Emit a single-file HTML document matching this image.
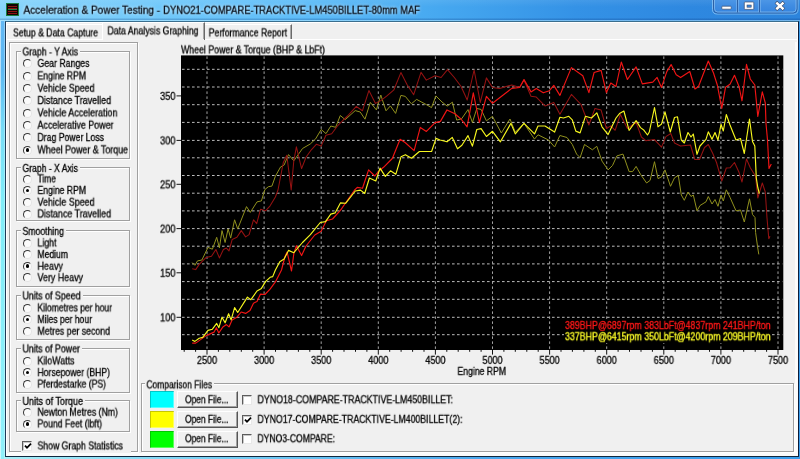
<!DOCTYPE html>
<html lang="en"><head><meta charset="utf-8"><title>Acceleration &amp; Power Testing</title>
<style>
html,body{margin:0;padding:0;background:#f0f0f0}
body{width:800px;height:459px;overflow:hidden;position:relative;background:#f0f0f0;font-family:"Liberation Sans",sans-serif}
body>div,.abs,.t{position:absolute}
.t{white-space:nowrap;line-height:1.15;transform-origin:0 0;will-change:transform;-webkit-text-stroke:0.3px currentColor;font-family:"Liberation Sans",sans-serif}
.frame{left:0;top:0;width:800px;height:459px;background:linear-gradient(90deg,#a8f0f8 0,#7cd4f6 25%,#4aa8ee 60%,#389cec 100%)}
.lb{left:0;top:20px;width:5px;height:439px;background:linear-gradient(90deg,rgba(255,255,255,.55) 0,rgba(255,255,255,.55) 1px,rgba(255,255,255,0) 1px,rgba(255,255,255,0) 4px,rgba(255,255,255,.3) 4px),linear-gradient(180deg,#62b8f4 0,#5cb8f2 50px,#78dcf6 110px,#80ecf8 180px,#90f0fa 100%)}
.title{left:0;top:0;width:800px;height:21px;background:linear-gradient(180deg,rgba(255,255,255,.08) 0,rgba(255,255,255,0) 7px,rgba(0,0,0,0) 18px,rgba(0,40,110,.22) 19px,rgba(0,40,110,.22) 20px,rgba(200,240,255,.45) 20px,rgba(200,240,255,.45) 21px),linear-gradient(90deg,#88d4fb 0,#70c8fa 20%,#5cbcf8 38%,#46a8f0 55%,#3492e6 72%,#2e88e0 86%,#2c84dc 100%)}
.client{left:5px;top:21px;width:794px;height:436px;background:#f0f0f0;border:1px solid #1c3a58;border-top-color:#3a6e8e;border-right-color:#0c1c38;border-bottom-color:#10283e;box-sizing:border-box;box-shadow:inset 1px 1px 0 #fff,inset -1px -1px 0 #fff}
.icon{left:6px;top:3px;width:13px;height:13px;background:#120404;border:1px solid #1c7c40;box-sizing:border-box}
.icon b{position:absolute;left:1px;right:1px;height:3px;border-top:1px solid #8c1414;border-bottom:1px solid #8c1414;box-sizing:border-box}
.icon b:nth-child(1){top:1.500px}.icon b:nth-child(2){top:5px;height:1px;border:none;background:#1e8444}.icon b:nth-child(3){top:6.500px}
.tabpanel{left:6px;top:39px;width:791px;height:416px;border-top:1px solid #fff;box-sizing:border-box}
.tab{box-sizing:border-box;border:1px solid #fff;border-right:1px solid #6a6a6a;border-bottom:none;background:#f0f0f0;box-shadow:inset -1px 0 0 #a8a8a8}
.tab.t1{border-right-color:#f0f0f0;box-shadow:none}.tab.sel{border-bottom:none}
.gb{box-sizing:border-box;border:1px solid #a0a0a0;box-shadow:inset 1px 1px 0 #fff,1px 1px 0 #fff}
.rd{width:9px;height:9px;border-radius:50%;box-sizing:border-box;background:#fbfbfb;border:1.3px solid #777;border-top-color:#383838;border-left-color:#383838;border-bottom-color:#e4e4e4;border-right-color:#e4e4e4}
.rd i{position:absolute;left:1.600px;top:1.600px;width:3.600px;height:3.600px;border-radius:50%;background:#000}
.cb{width:10px;height:10px;box-sizing:border-box;background:#fff;border:1px solid #5c5c5c;border-bottom-color:#e8e8e8;border-right-color:#e8e8e8;box-shadow:inset 1px 1px 0 #c8c8c8}
.cb svg{position:absolute;left:-0.500px;top:-0.500px}
.sw{box-sizing:border-box;box-shadow:inset 1px 1px 0 rgba(0,0,0,.22),inset -1px -1px 0 rgba(255,255,255,.35)}
.btn{box-sizing:border-box;background:#f0f0f0;border:1px solid #fff;border-right-color:#555;border-bottom-color:#555;box-shadow:inset -1px -1px 0 #a0a0a0}
</style></head>
<body>
<div class="frame"></div>
<div class="lb"></div>
<div class="title"></div>
<div class="client"></div>
<div class="icon"><b></b><b></b><b></b></div>
<svg class="abs" style="left:710px;top:0" width="90" height="17" viewBox="0 0 90 17">
<defs><linearGradient id="cg" x1="0" y1="0" x2="0" y2="1"><stop offset="0" stop-color="#4f98e6"/><stop offset="0.5" stop-color="#3f8ce2"/><stop offset="1" stop-color="#3584de"/></linearGradient></defs>
<path d="M2.5 -1 V9.5 Q2.5 14 7 14 H84 Q88 14 88 9.500 V-1" fill="none" stroke="#8cc4f4" stroke-width="1" opacity="0.8"/>
<path d="M3.5 -1 V9 Q3.500 13 7.500 13 H83.500 Q87 13 87 9 V-1 Z" fill="url(#cg)" stroke="#2d5fa4" stroke-width="1"/>
<path d="M4.5 0 V8.800 Q4.500 12 7.800 12 H83 Q86 12 86 8.800 V0" fill="none" stroke="#8fc3f2" stroke-width="0.900" opacity="0.75"/>
<path d="M27.5 0 V12.500 M49.500 0 V12.500" stroke="#2d5fa4" stroke-width="1"/>
<path d="M28.5 0 V12 M50.500 0 V12 M26.500 0 V12 M48.500 0 V12" stroke="#8fc3f2" stroke-width="0.800" opacity="0.6"/>
<rect x="11.800" y="6.200" width="9.400" height="3" rx="0.800" fill="#fff" stroke="#3c4c6c" stroke-width="0.700"/>
<rect x="34.300" y="2" width="9.500" height="7.400" rx="0.800" fill="#fff" stroke="#3c4c6c" stroke-width="0.700"/>
<rect x="37" y="5" width="4.200" height="2.200" fill="#3a86dc" stroke="#3c4c6c" stroke-width="0.600"/>
<path d="M67.200 3.400 L72.600 8.400 M72.600 3.400 L67.200 8.400" stroke="#3c4c6c" stroke-width="3.600" stroke-linecap="square"/>
<path d="M67.200 3.400 L72.600 8.400 M72.600 3.400 L67.200 8.400" stroke="#fff" stroke-width="2.500" stroke-linecap="square"/>
</svg>
<div class="tabpanel"></div>
<div class="tab t1" style="left:6px;top:24px;width:97px;height:15px"></div>
<div class="tab t3" style="left:204px;top:24px;width:88px;height:15px"></div>
<div class="tab sel" style="left:102px;top:22px;width:103px;height:18px"></div><div style="left:103px;top:39px;width:101px;height:2px;background:#f0f0f0"></div>
<div class="gb" style="left:9px;top:42px;width:129px;height:410px"></div>
<div class="gb" style="left:16px;top:50.5px;width:114px;height:108.0px"></div>
<div style="left:20.5px;top:44.5px;width:59.5px;height:12px;background:#f0f0f0"></div>
<div class="rd" style="left:23px;top:59.0px"></div>
<div class="rd" style="left:23px;top:71.5px"></div>
<div class="rd" style="left:23px;top:83.8px"></div>
<div class="rd" style="left:23px;top:96.1px"></div>
<div class="rd" style="left:23px;top:108.5px"></div>
<div class="rd" style="left:23px;top:120.8px"></div>
<div class="rd" style="left:23px;top:133.1px"></div>
<div class="rd" style="left:23px;top:145.5px"><i></i></div>
<div class="gb" style="left:16px;top:167px;width:114px;height:54px"></div>
<div style="left:20.5px;top:161px;width:59.5px;height:12px;background:#f0f0f0"></div>
<div class="rd" style="left:23px;top:174.5px"></div>
<div class="rd" style="left:23px;top:186.0px"><i></i></div>
<div class="rd" style="left:23px;top:197.8px"></div>
<div class="rd" style="left:23px;top:209.5px"></div>
<div class="gb" style="left:16px;top:230px;width:114px;height:57px"></div>
<div style="left:20.5px;top:224px;width:45.5px;height:12px;background:#f0f0f0"></div>
<div class="rd" style="left:23px;top:238.5px"></div>
<div class="rd" style="left:23px;top:250.1px"></div>
<div class="rd" style="left:23px;top:261.8px"><i></i></div>
<div class="rd" style="left:23px;top:273.3px"></div>
<div class="gb" style="left:16px;top:294.5px;width:114px;height:45.0px"></div>
<div style="left:20.5px;top:288.5px;width:62.0px;height:12px;background:#f0f0f0"></div>
<div class="rd" style="left:23px;top:303.5px"></div>
<div class="rd" style="left:23px;top:315.1px"><i></i></div>
<div class="rd" style="left:23px;top:326.8px"></div>
<div class="gb" style="left:16px;top:347.5px;width:114px;height:45.19999999999999px"></div>
<div style="left:20.5px;top:341.5px;width:61.5px;height:12px;background:#f0f0f0"></div>
<div class="rd" style="left:23px;top:356.5px"></div>
<div class="rd" style="left:23px;top:368.2px"><i></i></div>
<div class="rd" style="left:23px;top:379.7px"></div>
<div class="gb" style="left:16px;top:400px;width:114px;height:32px"></div>
<div style="left:20.5px;top:394px;width:64.5px;height:12px;background:#f0f0f0"></div>
<div class="rd" style="left:23px;top:407.8px"></div>
<div class="rd" style="left:23px;top:419.5px"><i></i></div>
<div style="left:21px;top:440px;width:110px;height:13px;background:#f0f0f0"></div>
<div class="cb" style="left:22px;top:440.7px"><svg width="10" height="10" viewBox="0 0 10 10"><path d="M2 4.6 L4 6.8 L8 2.6" fill="none" stroke="#000" stroke-width="1.8"/></svg></div>
<div style="left:6px;top:453px;width:792px;height:3px;background:#fbfbfb"></div>
<div style="left:795px;top:42px;width:3px;height:414px;background:#fbfbfb"></div>
<div class="gb" style="left:141px;top:382.5px;width:653px;height:69.5px"></div>
<div style="left:144.5px;top:376.5px;width:69.5px;height:12px;background:#f0f0f0"></div>
<div class="sw" style="left:150px;top:391px;width:24px;height:17px;background:#00ffff"></div>
<div class="btn" style="left:176.5px;top:391px;width:61px;height:17px"></div>
<div class="cb" style="left:242px;top:395px"></div>
<div class="sw" style="left:150px;top:411px;width:24px;height:17px;background:#ffff00"></div>
<div class="btn" style="left:176.5px;top:411px;width:61px;height:17px"></div>
<div class="cb" style="left:242px;top:414.6px"><svg width="10" height="10" viewBox="0 0 10 10"><path d="M2 4.6 L4 6.8 L8 2.6" fill="none" stroke="#000" stroke-width="1.8"/></svg></div>
<div class="sw" style="left:150px;top:431px;width:24px;height:17px;background:#00ff00"></div>
<div class="btn" style="left:176.5px;top:431px;width:61px;height:17px"></div>
<div class="cb" style="left:242px;top:434px"></div>
<svg class="abs" style="left:0;top:0" width="800" height="459" viewBox="0 0 800 459">
<rect x="181" y="55.4" width="602.3" height="294.6" fill="#000"/>
<path d="M182 334.7H782.3M182 317.3H782.3M182 299.3H782.3M182 281.6H782.3M182 263.9H782.3M182 246.2H782.3M182 228.6H782.3M182 210.9H782.3M182 193.2H782.3M182 175.5H782.3M182 157.8H782.3M182 140.4H782.3M182 122.4H782.3M182 104.7H782.3M182 87.0H782.3M182 69.3H782.3" stroke="#bcbcbc" stroke-width="1" stroke-dasharray="2.600 2.400" fill="none"/>
<path d="M207.0 56.4V350M264.1 56.4V350M321.2 56.4V350M378.3 56.4V350M435.4 56.4V350M492.5 56.4V350M549.6 56.4V350M606.7 56.4V350M663.8 56.4V350M720.9 56.4V350M778.0 56.4V350" stroke="#a4a4a4" stroke-width="1" stroke-dasharray="2.500 2.500" fill="none"/>
<path d="M176.500 317.3H181M176.500 272.8H181M176.500 228.6H181M176.500 184.3H181M176.500 140.4H181M176.500 95.9H181M184.2 350V351.8M195.6 350V351.8M207.0 350V354.6M218.4 350V351.8M229.8 350V351.8M241.3 350V351.8M252.7 350V351.8M264.1 350V354.6M275.5 350V351.8M286.9 350V351.8M298.4 350V351.8M309.8 350V351.8M321.2 350V354.6M332.6 350V351.8M344.0 350V351.8M355.5 350V351.8M366.9 350V351.8M378.3 350V354.6M389.7 350V351.8M401.1 350V351.8M412.6 350V351.8M424.0 350V351.8M435.4 350V354.6M446.8 350V351.8M458.2 350V351.8M469.7 350V351.8M481.1 350V351.8M492.5 350V354.6M503.9 350V351.8M515.3 350V351.8M526.8 350V351.8M538.2 350V351.8M549.6 350V354.6M561.0 350V351.8M572.4 350V351.8M583.9 350V351.8M595.3 350V351.8M606.7 350V354.6M618.1 350V351.8M629.5 350V351.8M641.0 350V351.8M652.4 350V351.8M663.8 350V354.6M675.2 350V351.8M686.6 350V351.8M698.1 350V351.8M709.5 350V351.8M720.9 350V354.6M732.3 350V351.8M743.7 350V351.8M755.2 350V351.8M766.6 350V351.8M778.0 350V354.6" stroke="#111" stroke-width="1" fill="none"/>
<polyline points="192.2,262.6 194.9,265.3 197.5,260.9 201.9,260.0 208.0,247.4 212.4,249.2 216.7,237.3 219.4,247.8 222.0,230.6 225.1,242.5 228.1,228.9 230.7,238.1 234.6,219.8 237.7,228.9 246.5,206.6 250.3,212.4 257.0,201.9 261.4,200.9 264.9,189.5 268.4,186.7 271.9,186.1 275.4,176.2 280.6,166.9 284.1,165.1 288.5,154.6 293.8,160.8 302.5,148.5 310.4,143.9 315.6,138.9 321.2,129.5 326.0,133.6 330.8,126.0 335.6,127.3 340.3,115.5 345.2,119.7 355.2,110.6 360.2,112.0 365.0,119.2 370.3,102.4 376.4,109.9 380.8,95.0 386.0,110.8 390.4,105.9 395.6,113.4 400.9,95.4 405.3,96.4 411.4,103.8 416.6,99.4 426.3,104.6 431.5,107.6 435.9,95.9 442.0,102.0 447.2,106.1 452.4,102.2 456.7,120.1 461.6,118.8 468.0,109.6 472.4,122.5 476.8,108.5 481.1,109.4 486.4,120.8 492.5,116.4 501.3,133.0 510.0,119.0 515.3,132.1 524.0,123.4 534.5,139.1 538.0,134.8 548.5,140.0 554.6,147.0 559.9,135.5 567.0,137.5 572.3,144.5 576.6,154.1 580.1,157.6 584.5,144.5 592.4,149.8 596.8,146.3 602.0,161.1 608.1,169.9 612.5,165.5 616.9,155.9 623.0,154.1 629.1,171.6 632.6,171.6 636.1,166.4 640.5,174.3 646.6,183.0 650.1,180.4 654.5,161.7 658.0,178.6 661.5,176.9 665.0,169.9 670.5,186.3 674.5,177.8 678.3,175.5 681.3,195.0 684.3,200.3 688.0,192.0 691.0,196.5 693.3,195.0 697.0,210.8 700.0,205.5 706.0,201.8 708.3,196.5 712.0,204.0 715.0,199.5 718.0,206.3 721.0,195.0 723.3,201.0 726.3,189.8 730.0,197.3 736.0,210.8 740.5,210.0 744.3,222.0 749.5,198.8 752.5,214.5 755.0,217.5 755.6,232.5 757.5,246.3 758.8,254.4" fill="none" stroke="#90901e" stroke-width="1" stroke-linejoin="round"/>
<polyline points="192.2,268.8 195.7,269.6 199.2,264.4 206.2,257.4 211.5,256.2 215.9,249.5 219.4,257.9 223.4,249.5 226.4,248.1 229.0,250.9 232.2,239.4 236.9,237.3 241.3,230.6 245.6,236.9 249.1,234.6 253.5,219.8 256.7,223.6 260.5,209.3 265.8,210.7 270.1,205.8 275.4,197.0 278.0,190.0 283.3,162.5 286.8,155.2 291.2,190.0 293.8,160.8 296.4,146.8 301.6,168.6 306.0,157.3 311.3,149.8 316.3,144.3 321.2,146.1 325.9,135.2 331.7,133.7 338.0,125.3 343.3,120.0 347.5,116.0 356.3,106.4 362.4,110.8 368.9,90.6 375.5,103.4 380.8,100.6 386.9,95.9 393.9,89.8 400.9,72.6 407.0,84.5 413.7,94.7 421.0,72.3 426.3,80.1 435.0,75.8 441.1,77.5 447.5,69.6 454.3,77.5 461.1,86.5 467.2,100.0 474.1,70.0 480.3,102.4 486.4,77.9 492.5,87.5 499.5,88.4 511.8,84.9 519.6,87.5 524.0,80.0 531.0,96.3 536.3,97.1 545.0,105.9 553.8,102.4 559.9,114.2 571.4,94.4 581.0,104.5 588.9,125.0 595.0,108.4 601.1,110.1 606.4,128.5 610.8,125.9 615.1,130.3 620.4,114.5 627.4,128.5 636.1,122.4 641.4,137.0 645.8,140.7 654.5,139.6 661.5,147.1 665.9,136.6 670.8,133.5 674.5,143.0 680.5,146.0 690.5,145.0 694.8,159.5 699.5,159.5 704.5,147.5 708.3,144.5 712.8,153.5 716.5,162.5 721.8,181.0 726.3,168.0 730.0,167.8 734.5,162.5 739.0,172.3 742.0,182.0 746.5,159.0 750.3,167.8 755.5,176.0 757.8,198.0 762.3,183.0 765.3,192.0 767.0,218.0 768.8,238.8 770.0,236.3" fill="none" stroke="#941212" stroke-width="1.05" stroke-linejoin="round"/>
<polyline points="192.2,343.1 195.7,343.1 206.2,335.6 214.1,332.1 216.4,327.7 218.8,333.0 222.9,326.9 226.4,324.6 229.0,326.9 232.1,319.9 236.9,317.2 241.2,312.0 245.6,313.4 250.0,310.6 253.5,303.2 257.0,301.5 260.5,294.1 264.9,294.5 270.1,289.2 275.4,281.9 281.5,270.0 285.0,256.5 287.1,252.1 291.5,271.0 293.8,253.9 296.4,245.7 301.6,255.6 306.0,246.0 314.8,235.0 321.1,231.3 326.4,220.8 332.5,219.0 340.4,210.3 347.6,200.0 354.6,190.0 357.3,187.4 362.5,188.3 368.6,169.9 374.8,176.0 378.3,171.6 383.5,167.3 392.3,158.5 400.1,139.3 405.4,142.8 414.1,150.6 420.3,127.4 426.4,131.4 435.1,122.6 440.4,121.4 447.0,109.9 454.9,113.8 461.0,119.0 467.1,126.9 473.3,92.8 479.4,122.5 486.4,96.3 492.5,103.3 511.8,88.4 519.6,87.5 524.0,79.6 531.0,91.9 536.3,88.4 543.3,92.8 549.4,90.7 553.8,85.4 559.9,95.4 571.4,67.6 582.8,75.7 588.9,92.6 594.1,72.5 601.1,70.4 606.4,92.6 610.8,83.0 616.0,86.5 621.3,62.0 627.4,79.5 636.1,66.9 642.3,83.9 652.8,82.1 657.1,77.4 661.5,87.4 666.8,71.6 671.1,64.6 676.2,74.8 680.6,77.6 689.8,71.5 695.0,89.0 698.5,86.5 708.3,61.0 713.5,73.0 717.3,85.0 721.8,108.3 725.5,87.3 730.0,84.3 734.5,75.3 739.0,86.5 742.0,100.8 746.5,64.3 750.3,79.0 754.8,85.0 757.8,116.5 762.3,91.8 765.3,103.0 766.0,123.5 767.5,140.0 769.0,168.5 771.3,164.0" fill="none" stroke="#f01414" stroke-width="1.15" stroke-linejoin="round"/>
<polyline points="192.2,340.0 194.9,341.4 199.2,338.2 202.7,337.4 208.0,330.4 212.4,329.2 216.7,323.4 218.9,327.7 222.0,317.2 225.1,322.8 228.6,313.7 231.1,319.9 234.6,307.6 237.7,312.5 247.4,297.1 250.9,299.7 257.0,291.0 261.4,288.4 265.7,281.4 270.1,277.3 272.7,276.6 275.4,270.0 279.8,261.8 284.1,259.1 288.5,250.4 293.8,252.7 302.5,242.5 310.4,234.6 320.3,222.5 325.5,221.6 330.8,214.1 335.1,212.9 340.4,202.9 345.6,203.3 355.3,191.0 360.5,190.1 364.7,193.5 369.4,178.0 375.8,181.0 380.0,168.1 385.3,176.4 390.5,170.8 395.8,174.3 401.0,156.8 405.4,154.7 411.5,158.2 419.4,151.5 431.6,151.5 436.0,138.4 440.0,140.0 447.0,141.8 452.3,137.4 457.5,148.8 461.9,145.3 468.0,135.6 472.4,146.1 476.8,129.5 481.1,128.6 486.4,136.5 492.5,131.3 500.4,141.8 510.9,123.4 515.3,133.9 524.0,123.4 534.5,133.9 538.0,126.0 545.0,126.0 554.6,132.1 559.9,117.3 563.5,118.0 568.8,116.3 572.3,119.8 575.8,131.1 580.1,132.9 585.4,116.3 591.5,118.0 596.8,112.8 602.0,126.8 608.1,134.6 616.0,118.0 619.5,113.6 623.9,111.0 629.1,130.3 636.1,120.6 640.5,127.6 644.0,130.3 647.5,135.0 649.3,132.0 654.5,107.5 658.0,126.8 661.5,124.1 665.0,111.9 670.3,132.0 674.5,117.5 677.5,116.8 681.3,140.0 684.3,143.0 688.0,132.5 691.0,137.0 693.3,134.0 697.0,154.3 700.0,146.0 706.0,139.3 708.3,131.8 712.0,139.3 715.0,132.5 718.0,140.0 721.0,124.3 723.3,131.0 726.3,114.5 730.0,125.0 736.0,140.0 740.5,138.5 744.3,153.5 749.5,119.0 752.5,141.5 754.8,146.0 756.3,178.0 757.8,187.5 759.3,193.5" fill="none" stroke="#f6f61e" stroke-width="1.15" stroke-linejoin="round"/>
</svg>
<div style="left:564px;top:320.6px;width:207.3px;height:22.4px;background:#000"></div>
<span class="t" style="left:23px;top:3px;font-size:11px;color:#040a14;transform:translate(0.50px,0.69px) scaleX(0.9125);text-shadow:0 0 3px rgba(255,255,255,.75),0 0 5px rgba(255,255,255,.5);">Acceleration &amp; Power Testing -</span>
<span class="t" style="left:163px;top:3px;font-size:11px;color:#040a14;transform:translate(0.20px,0.69px) scaleX(0.8510);text-shadow:0 0 3px rgba(255,255,255,.75),0 0 5px rgba(255,255,255,.5);">DYNO21-COMPARE-TRACKTIVE-LM450BILLET-80mm MAF</span>
<span class="t" style="left:13px;top:27px;font-size:10.2px;color:#000;transform:translate(0.00px,0.42px) scaleX(0.8528);">Setup &amp; Data Capture</span>
<span class="t" style="left:107px;top:25px;font-size:10.2px;color:#000;transform:translate(0.50px,0.42px) scaleX(0.8547);">Data Analysis Graphing</span>
<span class="t" style="left:208px;top:27px;font-size:10.2px;color:#000;transform:translate(0.70px,0.42px) scaleX(0.8536);">Performance Report</span>
<span class="t" style="left:22px;top:46px;font-size:10.2px;color:#000;transform:translate(0.50px,0.42px) scaleX(0.8498);">Graph - Y Axis</span>
<span class="t" style="left:37px;top:57px;font-size:10.2px;color:#000;transform:translate(0.50px,0.92px) scaleX(0.8582);">Gear Ranges</span>
<span class="t" style="left:37px;top:70px;font-size:10.2px;color:#000;transform:translate(0.50px,0.42px) scaleX(0.8479);">Engine RPM</span>
<span class="t" style="left:37px;top:82px;font-size:10.2px;color:#000;transform:translate(0.50px,0.72px) scaleX(0.8750);">Vehicle Speed</span>
<span class="t" style="left:37px;top:95px;font-size:10.2px;color:#000;transform:translate(0.50px,0.02px) scaleX(0.8770);">Distance Travelled</span>
<span class="t" style="left:37px;top:107px;font-size:10.2px;color:#000;transform:translate(0.50px,0.42px) scaleX(0.8773);">Vehicle Acceleration</span>
<span class="t" style="left:37px;top:119px;font-size:10.2px;color:#000;transform:translate(0.50px,0.72px) scaleX(0.8715);">Accelerative Power</span>
<span class="t" style="left:37px;top:132px;font-size:10.2px;color:#000;transform:translate(0.50px,0.02px) scaleX(0.8510);">Drag Power Loss</span>
<span class="t" style="left:37px;top:144px;font-size:10.2px;color:#000;transform:translate(0.50px,0.42px) scaleX(0.8701);">Wheel Power &amp; Torque</span>
<span class="t" style="left:22px;top:162px;font-size:10.2px;color:#000;transform:translate(0.50px,0.92px) scaleX(0.8449);">Graph - X Axis</span>
<span class="t" style="left:37px;top:173px;font-size:10.2px;color:#000;transform:translate(0.50px,0.42px) scaleX(0.8309);">Time</span>
<span class="t" style="left:37px;top:184px;font-size:10.2px;color:#000;transform:translate(0.50px,0.92px) scaleX(0.8479);">Engine RPM</span>
<span class="t" style="left:37px;top:196px;font-size:10.2px;color:#000;transform:translate(0.50px,0.72px) scaleX(0.8750);">Vehicle Speed</span>
<span class="t" style="left:37px;top:208px;font-size:10.2px;color:#000;transform:translate(0.50px,0.42px) scaleX(0.8770);">Distance Travelled</span>
<span class="t" style="left:22px;top:225px;font-size:10.2px;color:#000;transform:translate(0.50px,0.92px) scaleX(0.8518);">Smoothing</span>
<span class="t" style="left:37px;top:237px;font-size:10.2px;color:#000;transform:translate(0.50px,0.42px) scaleX(0.8600);">Light</span>
<span class="t" style="left:37px;top:249px;font-size:10.2px;color:#000;transform:translate(0.50px,0.02px) scaleX(0.8417);">Medium</span>
<span class="t" style="left:37px;top:260px;font-size:10.2px;color:#000;transform:translate(0.50px,0.72px) scaleX(0.8826);">Heavy</span>
<span class="t" style="left:37px;top:272px;font-size:10.2px;color:#000;transform:translate(0.50px,0.22px) scaleX(0.8734);">Very Heavy</span>
<span class="t" style="left:22px;top:290px;font-size:10.2px;color:#000;transform:translate(0.50px,0.42px) scaleX(0.8679);">Units of Speed</span>
<span class="t" style="left:37px;top:302px;font-size:10.2px;color:#000;transform:translate(0.50px,0.42px) scaleX(0.8380);">Kilometres per hour</span>
<span class="t" style="left:37px;top:314px;font-size:10.2px;color:#000;transform:translate(0.50px,0.02px) scaleX(0.8441);">Miles per hour</span>
<span class="t" style="left:37px;top:325px;font-size:10.2px;color:#000;transform:translate(0.50px,0.72px) scaleX(0.8593);">Metres per second</span>
<span class="t" style="left:22px;top:343px;font-size:10.2px;color:#000;transform:translate(0.50px,0.42px) scaleX(0.8679);">Units of Power</span>
<span class="t" style="left:37px;top:355px;font-size:10.2px;color:#000;transform:translate(0.50px,0.42px) scaleX(0.8674);">KiloWatts</span>
<span class="t" style="left:37px;top:367px;font-size:10.2px;color:#000;transform:translate(0.50px,0.12px) scaleX(0.8480);">Horsepower (BHP)</span>
<span class="t" style="left:37px;top:378px;font-size:10.2px;color:#000;transform:translate(0.50px,0.62px) scaleX(0.8460);">Pferdestarke (PS)</span>
<span class="t" style="left:22px;top:395px;font-size:10.2px;color:#000;transform:translate(0.50px,0.92px) scaleX(0.8852);">Units of Torque</span>
<span class="t" style="left:37px;top:406px;font-size:10.2px;color:#000;transform:translate(0.50px,0.72px) scaleX(0.8567);">Newton Metres (Nm)</span>
<span class="t" style="left:37px;top:418px;font-size:10.2px;color:#000;transform:translate(0.50px,0.42px) scaleX(0.8499);">Pound Feet (lbft)</span>
<span class="t" style="left:37px;top:440px;font-size:10.2px;color:#000;transform:translate(0.50px,0.42px) scaleX(0.8531);">Show Graph Statistics</span>
<span class="t" style="left:146px;top:379px;font-size:10.2px;color:#000;transform:translate(0.50px,0.32px) scaleX(0.8263);">Comparison Files</span>
<span class="t" style="left:185px;top:394px;font-size:10.2px;color:#000;transform:translate(0.00px,0.22px) scaleX(0.8259);">Open File...</span>
<span class="t" style="left:257px;top:394px;font-size:10.2px;color:#000;transform:translate(0.50px,0.22px) scaleX(0.8662);">DYNO18-COMPARE-TRACKTIVE-LM450BILLET:</span>
<span class="t" style="left:185px;top:413px;font-size:10.2px;color:#000;transform:translate(0.00px,0.82px) scaleX(0.8259);">Open File...</span>
<span class="t" style="left:257px;top:413px;font-size:10.2px;color:#000;transform:translate(0.50px,0.82px) scaleX(0.8567);">DYNO17-COMPARE-TRACKTIVE-LM400BILLET(2):</span>
<span class="t" style="left:185px;top:433px;font-size:10.2px;color:#000;transform:translate(0.00px,0.22px) scaleX(0.8259);">Open File...</span>
<span class="t" style="left:257px;top:433px;font-size:10.2px;color:#000;transform:translate(0.50px,0.22px) scaleX(0.8417);">DYNO3-COMPARE:</span>
<span class="t" style="left:181px;top:44px;font-size:10.2px;color:#000;transform:translate(0.00px,0.42px) scaleX(0.8611);">Wheel Power &amp; Torque (BHP &amp; LbFt)</span>
<span class="t" style="left:160px;top:312px;font-size:10.2px;color:#000;transform:translate(0.00px,0.32px) scaleX(0.9118);">100</span>
<span class="t" style="left:160px;top:267px;font-size:10.2px;color:#000;transform:translate(0.00px,0.79px) scaleX(0.9118);">150</span>
<span class="t" style="left:160px;top:223px;font-size:10.2px;color:#000;transform:translate(0.00px,0.57px) scaleX(0.9118);">200</span>
<span class="t" style="left:160px;top:179px;font-size:10.2px;color:#000;transform:translate(0.00px,0.34px) scaleX(0.9118);">250</span>
<span class="t" style="left:160px;top:135px;font-size:10.2px;color:#000;transform:translate(0.00px,0.42px) scaleX(0.9118);">300</span>
<span class="t" style="left:160px;top:90px;font-size:10.2px;color:#000;transform:translate(0.00px,0.89px) scaleX(0.9118);">350</span>
<span class="t" style="left:196px;top:354px;font-size:10.2px;color:#000;transform:translate(0.90px,0.92px) scaleX(0.8910);">2500</span>
<span class="t" style="left:254px;top:354px;font-size:10.2px;color:#000;transform:translate(0.00px,0.92px) scaleX(0.8910);">3000</span>
<span class="t" style="left:311px;top:354px;font-size:10.2px;color:#000;transform:translate(0.10px,0.92px) scaleX(0.8910);">3500</span>
<span class="t" style="left:368px;top:354px;font-size:10.2px;color:#000;transform:translate(0.20px,0.92px) scaleX(0.8910);">4000</span>
<span class="t" style="left:425px;top:354px;font-size:10.2px;color:#000;transform:translate(0.30px,0.92px) scaleX(0.8910);">4500</span>
<span class="t" style="left:482px;top:354px;font-size:10.2px;color:#000;transform:translate(0.40px,0.92px) scaleX(0.8910);">5000</span>
<span class="t" style="left:539px;top:354px;font-size:10.2px;color:#000;transform:translate(0.50px,0.92px) scaleX(0.8910);">5500</span>
<span class="t" style="left:596px;top:354px;font-size:10.2px;color:#000;transform:translate(0.60px,0.92px) scaleX(0.8910);">6000</span>
<span class="t" style="left:653px;top:354px;font-size:10.2px;color:#000;transform:translate(0.70px,0.92px) scaleX(0.8910);">6500</span>
<span class="t" style="left:710px;top:354px;font-size:10.2px;color:#000;transform:translate(0.80px,0.92px) scaleX(0.8910);">7000</span>
<span class="t" style="left:767px;top:354px;font-size:10.2px;color:#000;transform:translate(0.90px,0.92px) scaleX(0.8910);">7500</span>
<span class="t" style="left:457px;top:365px;font-size:10.2px;color:#000;transform:translate(0.50px,0.92px) scaleX(0.8479);">Engine RPM</span>
<span class="t" style="left:565px;top:320px;font-size:10.4px;color:#ff1818;transform:translate(0.00px,0.04px) scaleX(0.8501);-webkit-text-stroke:0.34px currentColor;">389BHP@6897rpm 383LbFt@4837rpm 241BHP/ton</span>
<span class="t" style="left:565px;top:331px;font-size:10.4px;color:#ffff28;transform:translate(0.00px,0.24px) scaleX(0.8501);-webkit-text-stroke:0.34px currentColor;">337BHP@6415rpm 350LbFt@4200rpm 209BHP/ton</span>
</body></html>
